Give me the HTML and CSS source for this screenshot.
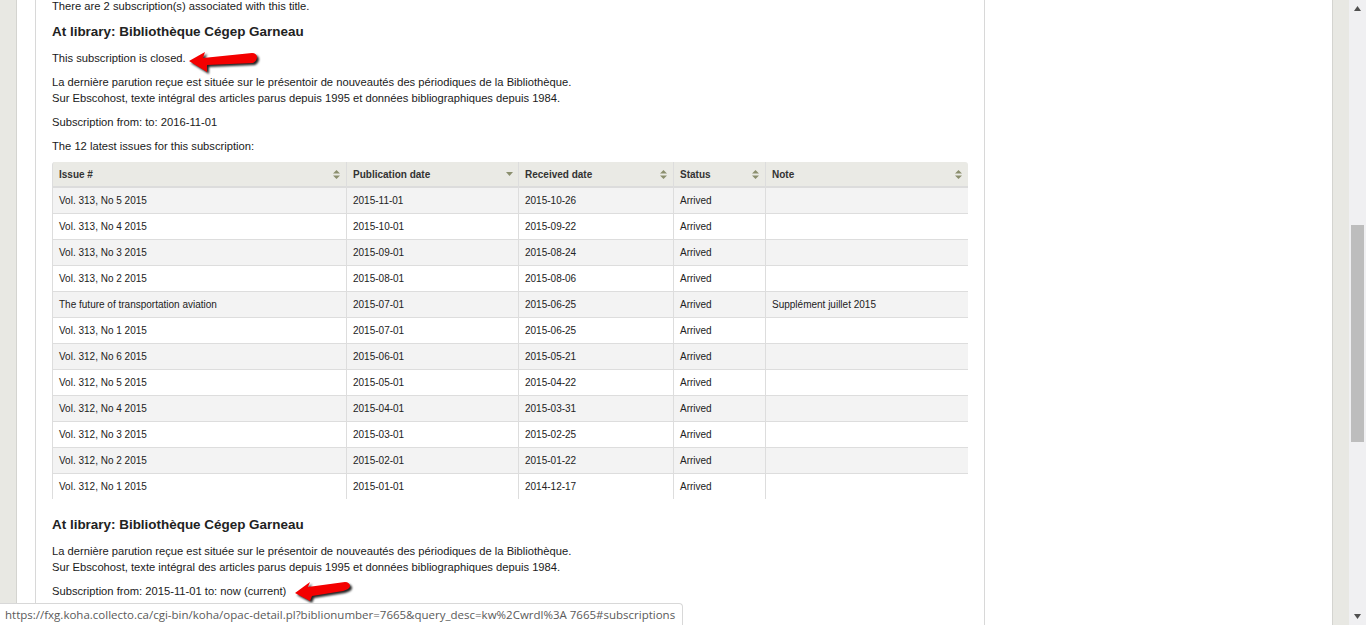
FILE: index.html
```html
<!DOCTYPE html>
<html lang="en">
<head>
<meta charset="utf-8">
<title>Subscriptions</title>
<link rel="stylesheet" href="styles.css">
</head>
<body>
<div class="viewport">
  <div class="gutter gutter-left"></div>
  <div class="page">
    <main class="main">
      <p class="intro">There are 2 subscription(s) associated with this title.</p>
      <h3 class="library">At library: Bibliothèque Cégep Garneau</h3>
      <p class="para para-first">This subscription is closed.</p>
      <p class="para">La dernière parution reçue est située sur le présentoir de nouveautés des périodiques de la Bibliothèque.<br>Sur Ebscohost, texte intégral des articles parus depuis 1995 et données bibliographiques depuis 1984.</p>
      <p class="para">Subscription from: to: 2016-11-01</p>
      <p class="para">The 12 latest issues for this subscription:</p>
      <table class="issues">
        <colgroup>
          <col class="c1"><col class="c2"><col class="c3"><col class="c4"><col class="c5">
        </colgroup>
        <thead>
          <tr>
            <th><div class="th-in">Issue #<svg class="sort" viewBox="0 0 7 9"><path d="M3.5 0 7 3.5H0zM0 5.5h7L3.5 9z"/></svg></div></th>
            <th><div class="th-in">Publication date<svg class="sort sort-desc" viewBox="0 0 7 4"><path d="M0 0h7L3.5 4z"/></svg></div></th>
            <th><div class="th-in">Received date<svg class="sort" viewBox="0 0 7 9"><path d="M3.5 0 7 3.5H0zM0 5.5h7L3.5 9z"/></svg></div></th>
            <th><div class="th-in">Status<svg class="sort" viewBox="0 0 7 9"><path d="M3.5 0 7 3.5H0zM0 5.5h7L3.5 9z"/></svg></div></th>
            <th><div class="th-in">Note<svg class="sort" viewBox="0 0 7 9"><path d="M3.5 0 7 3.5H0zM0 5.5h7L3.5 9z"/></svg></div></th>
          </tr>
        </thead>
        <tbody>
          <tr><td>Vol. 313, No 5 2015</td><td>2015-11-01</td><td>2015-10-26</td><td>Arrived</td><td></td></tr>
          <tr><td>Vol. 313, No 4 2015</td><td>2015-10-01</td><td>2015-09-22</td><td>Arrived</td><td></td></tr>
          <tr><td>Vol. 313, No 3 2015</td><td>2015-09-01</td><td>2015-08-24</td><td>Arrived</td><td></td></tr>
          <tr><td>Vol. 313, No 2 2015</td><td>2015-08-01</td><td>2015-08-06</td><td>Arrived</td><td></td></tr>
          <tr><td>The future of transportation aviation</td><td>2015-07-01</td><td>2015-06-25</td><td>Arrived</td><td>Supplément juillet 2015</td></tr>
          <tr><td>Vol. 313, No 1 2015</td><td>2015-07-01</td><td>2015-06-25</td><td>Arrived</td><td></td></tr>
          <tr><td>Vol. 312, No 6 2015</td><td>2015-06-01</td><td>2015-05-21</td><td>Arrived</td><td></td></tr>
          <tr><td>Vol. 312, No 5 2015</td><td>2015-05-01</td><td>2015-04-22</td><td>Arrived</td><td></td></tr>
          <tr><td>Vol. 312, No 4 2015</td><td>2015-04-01</td><td>2015-03-31</td><td>Arrived</td><td></td></tr>
          <tr><td>Vol. 312, No 3 2015</td><td>2015-03-01</td><td>2015-02-25</td><td>Arrived</td><td></td></tr>
          <tr><td>Vol. 312, No 2 2015</td><td>2015-02-01</td><td>2015-01-22</td><td>Arrived</td><td></td></tr>
          <tr><td>Vol. 312, No 1 2015</td><td>2015-01-01</td><td>2014-12-17</td><td>Arrived</td><td></td></tr>
        </tbody>
      </table>
      <h3 class="library library-second">At library: Bibliothèque Cégep Garneau</h3>
      <p class="para para-second">La dernière parution reçue est située sur le présentoir de nouveautés des périodiques de la Bibliothèque.<br>Sur Ebscohost, texte intégral des articles parus depuis 1995 et données bibliographiques depuis 1984.</p>
      <p class="para">Subscription from: 2015-11-01 to: now (current)</p>
    </main>
  </div>
  <div class="gutter gutter-right"></div>
  <div class="scrollbar">
    <svg class="arrow-btn" viewBox="0 0 7 5"><path d="M3.5 0 7 5H0z"/></svg>
    <div class="track"><div class="thumb"></div></div>
    <svg class="arrow-btn" viewBox="0 0 7 5"><path d="M0 0h7L3.5 5z"/></svg>
  </div>
</div>
<svg class="callout callout-one" viewBox="0 0 74 24">
  <path class="callout-red" d="M1 10 17 1l-2 6 49-5c3 0 5 2 5 4 0 3-2 5-4 6l-46 2 0 7z"/>
</svg>
<svg class="callout callout-two" viewBox="0 0 74 24">
  <path class="callout-red" d="M1 13 16 2l-2 5 37-5c3 0 5 2 5 4 0 2-3 4-7 5l-31 5-2 5z"/>
</svg>
<div class="statusbar">https://fxg.koha.collecto.ca/cgi-bin/koha/opac-detail.pl?biblionumber=7665&amp;query_desc=kw%2Cwrdl%3A 7665#subscriptions</div>
</body>
</html>
```
FILE: styles.css
```css
html, body {
  margin: 0;
  padding: 0;
  height: 625px;
  overflow: hidden;
  background: #fff;
  font-family: "Liberation Sans", Arial, sans-serif;
  color: #1a1a1a;
}
.viewport {
  display: flex;
  height: 625px;
  overflow: hidden;
}
.gutter {
  flex: none;
  background: #e8e8e3;
}
.gutter-left {
  width: 16px;
  border-right: 1px solid #d4d4d0;
}
.gutter-right {
  width: 16px;
  border-left: 1px solid #d4d4d0;
}
.page {
  flex: 1;
  padding-left: 18px;
  background: #fff;
  min-width: 0;
}
.main {
  width: 916px;
  padding: 0 16px;
  height: 625px;
  overflow: hidden;
  box-sizing: content-box;
  border-left: 1px solid #d8d8d8;
  border-right: 1px solid #d8d8d8;
}
.intro {
  margin: 0;
  font-size: 11.2px;
  line-height: 13px;
}
.library {
  margin: 11px 0 0;
  font-size: 13.44px;
  line-height: 16px;
  font-weight: bold;
  color: #222;
}
.para {
  margin: 8px 0 0;
  font-size: 11.2px;
  line-height: 16px;
}
.para-first {
  margin-top: 10px;
}
.para-second {
  margin-top: 10px;
}
.issues {
  width: 916px;
  margin-top: 8px;
  border-collapse: separate;
  border-spacing: 0;
  table-layout: fixed;
  font-size: 10px;
}
.c1 { width: 294px; }
.c2 { width: 172px; }
.c3 { width: 155px; }
.c4 { width: 92px; }
.c5 { width: 203px; }
.issues th {
  height: 26px;
  padding: 0 6px;
  box-sizing: border-box;
  background: #eaeae5;
  border-left: 1px solid #ddd;
  border-bottom: 2px solid #dcdcdc;
  text-align: left;
  font-weight: bold;
  color: #333;
}
.issues th:first-child { border-top-left-radius: 3px; }
.issues th:last-child { border-top-right-radius: 3px; }
.th-in {
  display: flex;
  justify-content: space-between;
  align-items: center;
}
.sort {
  width: 7px;
  height: 9px;
  fill: #8b8f6e;
}
.sort-desc {
  width: 7px;
  height: 4px;
  margin-right: -1px;
}
.issues td {
  height: 26px;
  padding: 0 6px;
  box-sizing: border-box;
  border-left: 1px solid #ddd;
  border-bottom: 1px solid #ddd;
  white-space: nowrap;
  color: #222;
}
.issues tbody tr:nth-child(odd) td { background: #f3f3f3; }
.issues tbody tr:last-child td {
  height: 25px;
  border-bottom: 0;
}
.library-second {
  margin-top: 18px;
}
.scrollbar {
  flex: none;
  width: 17px;
  background: #f0f0f2;
  display: flex;
  flex-direction: column;
  align-items: center;
}
.arrow-btn {
  flex: none;
  width: 7px;
  height: 5px;
  margin: 6px 0;
  fill: #505050;
}
.track {
  flex: 1;
  align-self: stretch;
  padding-top: 208px;
}
.thumb {
  width: 13px;
  margin-left: 2px;
  height: 217px;
  background: #bdbdbd;
}
.callout {
  position: absolute;
  width: 74px;
  height: 24px;
  overflow: visible;
  filter: drop-shadow(2px 2px 1px #222);
}
.callout-one { left: 188px; top: 51px; }
.callout-two { left: 294px; top: 580px; }
.callout-red { fill: #f40000; }
.statusbar {
  position: absolute;
  left: 0;
  bottom: 0;
  height: 21px;
  padding: 0 7px 0 5px;
  background: #fff;
  border-top: 1px solid #d8d8d8;
  border-right: 1px solid #d8d8d8;
  border-top-right-radius: 4px;
  font-family: "Open Sans", "Noto Sans", sans-serif;
  font-size: 11.5px;
  line-height: 22px;
  color: #5a5a5a;
  white-space: nowrap;
}
```
